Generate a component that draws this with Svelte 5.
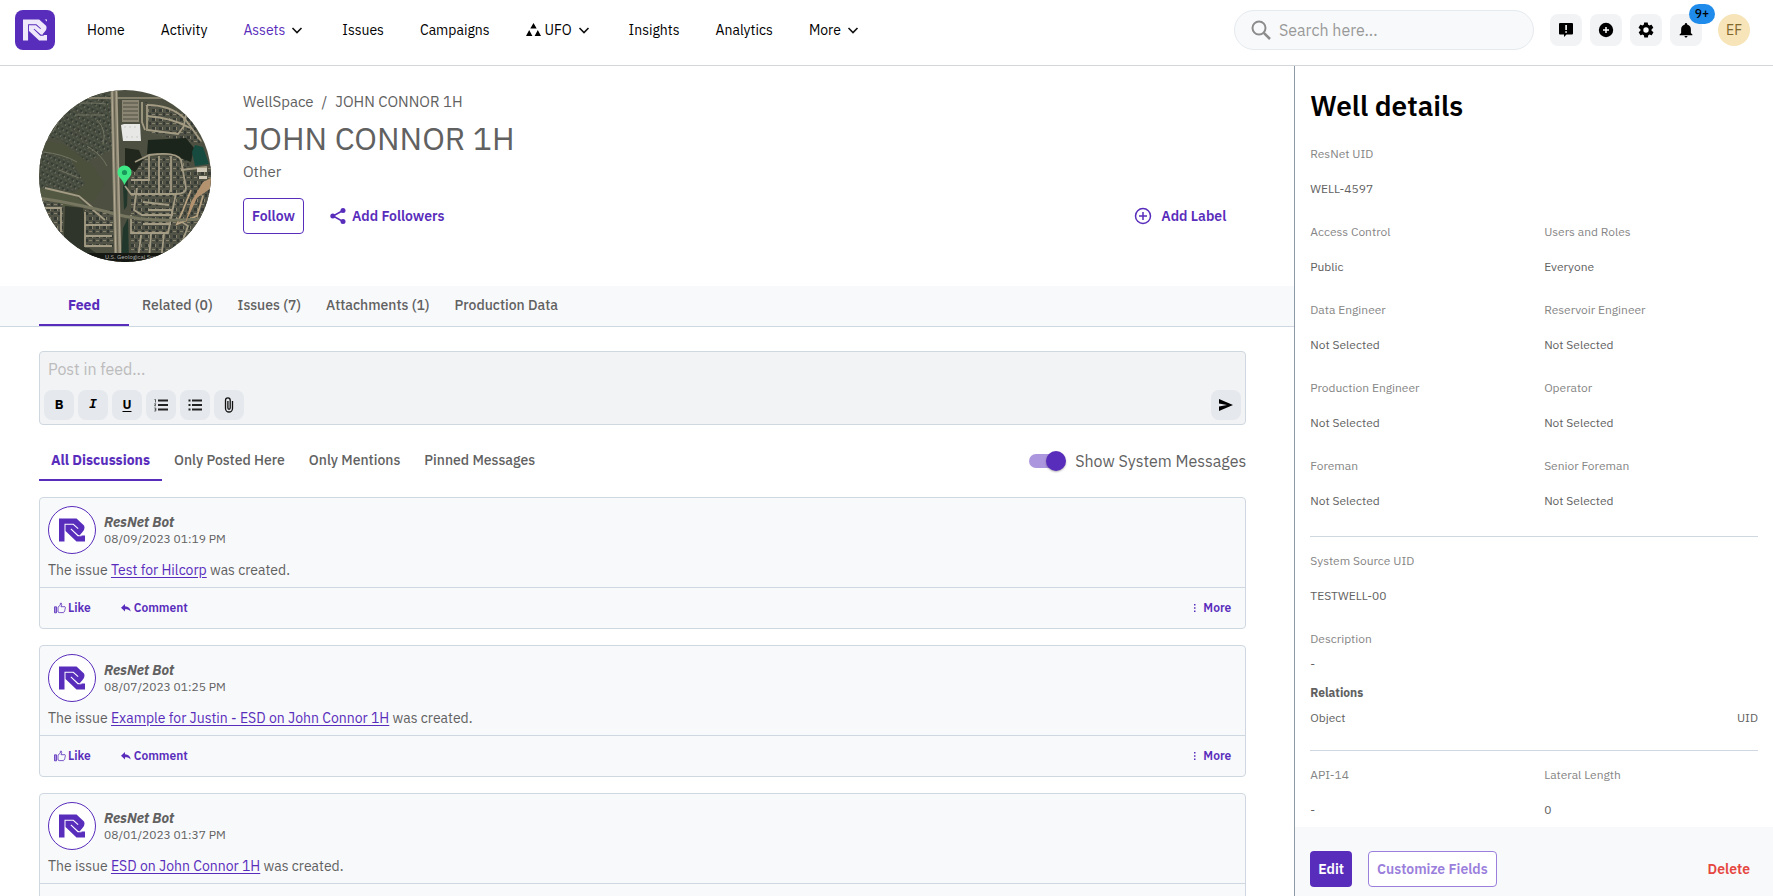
<script lang="ts">
    interface Post {
        date: string;
        issue: string;
    }

    interface Field {
        label: string;
        value: string;
        wide?: boolean;
    }

    const nav = [
        { label: "Home" },
        { label: "Activity" },
        { label: "Assets", menu: true, active: true },
        { label: "Issues" },
        { label: "Campaigns" },
        { label: "UFO", menu: true, icon: true },
        { label: "Insights" },
        { label: "Analytics" },
        { label: "More", menu: true },
    ];

    const tabs = ["Feed", "Related (0)", "Issues (7)", "Attachments (1)", "Production Data"];
    const filters = ["All Discussions", "Only Posted Here", "Only Mentions", "Pinned Messages"];

    const posts: Post[] = [
        { date: "08/09/2023 01:19 PM", issue: "Test for Hilcorp" },
        { date: "08/07/2023 01:25 PM", issue: "Example for Justin - ESD on John Connor 1H" },
        { date: "08/01/2023 01:37 PM", issue: "ESD on John Connor 1H" },
    ];

    const people: Field[] = [
        { label: "ResNet UID", value: "WELL-4597", wide: true },
        { label: "Access Control", value: "Public" },
        { label: "Users and Roles", value: "Everyone" },
        { label: "Data Engineer", value: "Not Selected" },
        { label: "Reservoir Engineer", value: "Not Selected" },
        { label: "Production Engineer", value: "Not Selected" },
        { label: "Operator", value: "Not Selected" },
        { label: "Foreman", value: "Not Selected" },
        { label: "Senior Foreman", value: "Not Selected" },
    ];

    const source: Field[] = [{ label: "System Source UID", value: "TESTWELL-00", wide: true }];

    const specs: Field[] = [
        { label: "API-14", value: "-" },
        { label: "Lateral Length", value: "0" },
    ];

    let activeTab = $state(0);
    let activeFilter = $state(0);
    let showSystem = $state(true);
    let search = $state("");
    let draft = $state("");
</script>

{#snippet logo(size: number, mark: boolean)}
    <svg width={size} height={size} viewBox="0 0 26 26" fill="currentColor" aria-hidden="true">
        <path
            fill-rule="evenodd"
            d="M0 1.500H17.500L25 8.500Q26.500 12 23.500 15L20.500 18.500H26V24.500H17.500L6.500 14V24.500H0ZM5.500 24.500V6.800H14.500L19.500 11.300 18.800 12 14 7.800H6.500V24.500ZM11.500 12.300L12.200 11.600 19.200 18 22.500 18.500V19.300H18.700Z"
        />
        {#if mark}
            <path d="M23.500 1.500H26V3.800z" />
        {/if}
    </svg>
{/snippet}

{#snippet chevron()}
    <svg class="chevron" width="12" height="12" viewBox="0 0 12 12" fill="none" stroke="#111" stroke-width="1.600" aria-hidden="true">
        <path d="M1.500 4L6 8.500 10.500 4" />
    </svg>
{/snippet}

{#snippet fieldList(fields: Field[])}
    <dl class="fields">
        {#each fields as field}
            <div class="field" class:wide={field.wide}>
                <dt>{field.label}</dt>
                <dd>{field.value}</dd>
            </div>
        {/each}
    </dl>
{/snippet}

<div class="app">
    <header class="topbar">
        <a class="brand" href="/" aria-label="ResNet">{@render logo(24, true)}</a>
        <nav class="nav">
            {#each nav as item}
                {#if item.menu}
                    <button class="nav-item" class:active={item.active}>
                        {#if item.icon}
                            <svg width="15" height="13" viewBox="0 0 15 13" aria-hidden="true">
                                <path d="M7.500 0l3.200 5.500H4.300zM3.200 7l3.200 6H0zM11.800 7l3.200 6H8.600z" />
                            </svg>
                        {/if}
                        <span class="nav-text">{item.label}</span>
                        {@render chevron()}
                    </button>
                {:else}
                    <a class="nav-item" href="/">{item.label}</a>
                {/if}
            {/each}
        </nav>
        <label class="search">
            <svg width="20" height="20" viewBox="0 0 20 20" fill="none" stroke="#8c8c8c" stroke-width="2" aria-hidden="true">
                <circle cx="8" cy="8" r="6.500" />
                <path d="M12.800 12.800L19 19" stroke-width="2.500" />
            </svg>
            <input type="text" placeholder="Search here..." aria-label="Search" bind:value={search} />
        </label>
        <div class="tools">
            <button class="tool" aria-label="Feedback">
                <svg width="16" height="16" viewBox="0 0 16 16">
                    <path d="M2 1h12a1 1 0 0 1 1 1v9.500a1 1 0 0 1-1 1H8.500L6 15v-2.500H2a1 1 0 0 1-1-1V2a1 1 0 0 1 1-1z" />
                    <path d="M7.300 3h1.600v5H7.300zM7.300 9.200h1.600v1.600H7.300z" fill="#fff" />
                </svg>
            </button>
            <button class="tool" aria-label="Create">
                <svg width="16" height="16" viewBox="0 0 16 16">
                    <circle cx="8" cy="8" r="7.200" />
                    <path d="M8 5v6M5 8h6" stroke="#fff" stroke-width="1.500" />
                </svg>
            </button>
            <button class="tool" aria-label="Settings">
                <svg width="18" height="18" viewBox="0 0 24 24">
                    <path
                        d="M19.400 13c0-.3.100-.6.100-1s0-.7-.1-1l2.100-1.600c.2-.2.200-.4.100-.6l-2-3.500c-.1-.2-.4-.3-.6-.2l-2.500 1c-.5-.4-1.100-.7-1.700-1l-.4-2.600c0-.3-.2-.5-.5-.5h-4c-.2 0-.5.2-.5.500l-.4 2.600c-.6.200-1.100.6-1.700 1l-2.500-1c-.2-.1-.5 0-.6.200l-2 3.500c-.1.200-.1.500.1.600L4.600 11c0 .3-.1.700-.1 1s0 .7.100 1l-2.100 1.600c-.2.200-.2.400-.1.600l2 3.500c.1.200.4.300.6.200l2.500-1c.5.400 1.100.7 1.700 1l.4 2.600c0 .3.200.5.500.5h4c.2 0 .5-.2.500-.5l.4-2.600c.6-.2 1.100-.6 1.700-1l2.500 1c.2.100.5 0 .6-.2l2-3.500c.1-.2.100-.5-.1-.6z"
                    />
                    <circle cx="12" cy="12" r="3.600" fill="#fff" />
                </svg>
            </button>
            <button class="tool" aria-label="Notifications">
                <svg width="18" height="18" viewBox="0 0 24 24">
                    <path
                        d="M12 22c1.100 0 2-.9 2-2h-4c0 1.100.9 2 2 2zm6.500-6v-5c0-3.100-1.900-5.600-5-6.300V4a1.500 1.500 0 0 0-3 0v.7c-3.100.7-5 3.200-5 6.300v5l-2 2v1h17v-1z"
                    />
                </svg>
                <span class="badge">9+</span>
            </button>
        </div>
        <button class="user">EF</button>
    </header>

    <div class="columns">
        <main class="main">
            <section class="hero">
                <svg class="map" viewBox="0 0 172 172" role="img" aria-label="Well location">
                    <defs>
                        <clipPath id="round"><circle cx="86" cy="86" r="86" /></clipPath>
                        <pattern id="homes" width="7" height="9" patternUnits="userSpaceOnUse">
                            <rect width="7" height="9" fill="#515346" />
                            <path d="M1 1h3v3H1zM5 5h2v3H5z" fill="#363a35" />
                            <path d="M4 1h1v3H4zM1 6h3v1H1z" fill="#85816d" />
                        </pattern>
                        <pattern id="homesLeft" width="5" height="6" patternUnits="userSpaceOnUse" patternTransform="rotate(24)">
                            <rect width="5" height="6" fill="#464c3f" />
                            <path d="M1 1h2v2H1z" fill="#343a31" />
                            <path d="M0 5h2v1H0z" fill="#5b5e4e" />
                            <path d="M3 2h1v2H3z" fill="#6f7060" />
                        </pattern>
                    </defs>
                    <g clip-path="url(#round)">
                        <rect width="172" height="172" fill="#4d5040" />
                        <path d="M0 0h73v60L48 72 22 50 0 46z" fill="url(#homesLeft)" />
                        <path d="M0 50l24 4 28 20 14 20-12 18-18-8L0 76z" fill="#4a503b" />
                        <path d="M2 60l30 10 14 24-10 8-36-4z" fill="url(#homesLeft)" />
                        <path d="M0 98l34 5 14 14H0z" fill="#535842" />
                        <path d="M0 110l24 4v40H0z" fill="url(#homes)" />
                        <path d="M26 116l18 2 6 40 20 14H24z" fill="#2f352a" />
                        <path d="M46 120h28v38H46z" fill="url(#homes)" />
                        <path d="M106 12l44 12 14 30-52-10z" fill="url(#homes)" />
                        <path d="M98 70l50-6 8 38-6 70H92V90z" fill="url(#homes)" />
                        <path d="M156 76h16v96h-28z" fill="url(#homes)" />
                        <path d="M83 10h17v22H83z" fill="#8a8673" />
                        <path d="M84 13h15M84 17h15M84 21h15M84 25h15M84 29h15" stroke="#504f45" />
                        <path d="M109 50l38-2 8 10-3 14-24-9-20 1z" fill="#1b251c" />
                        <path d="M86 58l14 2 4 10-8 12-10-6z" fill="#22271e" />
                        <path d="M156 55l8 2 6 17-14 2-3-14z" fill="#174b40" />
                        <path d="M84 96l5-6-1 26-3 4zM84 138l5-10 1 44h-8z" fill="#21372c" />
                        <g fill="none" stroke="#a39b83" stroke-width="1.800">
                            <path d="M103 12v20l3 8M108 15q24 0 38 14M108 26q26 2 43 12M109 40l30 4 6-8 2-12" />
                            <path d="M108 15v26M146 29l16 22" />
                            <path d="M96 72l14-7q28-4 32 5l5 28q0 6-10 6H92l-6-8M110 66v24H92M120 66v37M132 66v36M142 80l26-3M98 98l-3 22 8 5h30v-5h-24" />
                            <path d="M92 125v18h37l8-40M102 145l-3 24M112 144l-2 26M125 144l-3 27M137 128l12 8-8 22-10 8M104 112l26 3M104 134h28" />
                            <path d="M152 100l-8 20-6 14 20-8 6-20" stroke="#b8a382" />
                            <path d="M31 14q22-2 36 0M36 25h30M4 62q20 2 34 10M48 56q14 8 20 20M14 42l14-26M20 80l20 8M58 30q10 10 6 24" stroke="#727463" stroke-width="1" />
                            <path d="M6 98l34 8 14 12M0 118h22v24M46 122v34h27M46 135h27M46 146h27M54 120l12 10" />
                        </g>
                        <path d="M0 108q40 6 76 16t96 4" fill="none" stroke="#777660" stroke-width="3" />
                        <path d="M0 8h172" stroke="#85806c" stroke-width="2" />
                        <path d="M75-2l4 176" stroke="#8b8571" stroke-width="7" />
                        <path d="M73-2l4 176M77.500-2l4 176" stroke="#b3ab94" />
                        <path d="M75-2l4 176" stroke="#625f4f" />
                        <path d="M82 35l3-1h16l1 17H84z" fill="#e7e8e5" />
                        <path d="M85 37h13M87 47h12" stroke="#c9cbc7" stroke-dasharray="2 3" />
                        <path d="M152 112l12-20 8-4v10l-14 10-12 26z" fill="#b3936f" />
                        <path d="M158 78h10v4h-10zM160 86h8v3h-8z" fill="#d1c9b7" />
                        <rect y="163" width="172" height="9" fill="#151713" />
                        <text x="66" y="169" class="credit">U.S. Geological Survey</text>
                        <path d="M85.500 95c-2-6-7-8-7-12.500a7 7 0 0 1 14 0c0 4.500-5 6.500-7 12.500z" fill="#3ee884" />
                        <circle cx="85.500" cy="82.500" r="2.600" fill="#18995b" />
                    </g>
                </svg>
                <div class="intro">
                    <div class="crumbs">
                        <a href="/">WellSpace</a>
                        <span>/</span>
                        <span>JOHN CONNOR 1H</span>
                    </div>
                    <h1>JOHN CONNOR 1H</h1>
                    <p class="kind">Other</p>
                    <div class="hero-actions">
                        <button class="outlined">Follow</button>
                        <button class="link-button">
                            <svg width="16" height="16" viewBox="0 0 16 16" aria-hidden="true">
                                <path d="M13 2.500L3 8l10 5.500" fill="none" stroke="currentColor" stroke-width="1.500" />
                                <circle cx="13" cy="2.500" r="2.500" fill="currentColor" />
                                <circle cx="2.800" cy="8" r="2.500" fill="currentColor" />
                                <circle cx="13" cy="13.500" r="2.500" fill="currentColor" />
                            </svg>
                            Add Followers
                        </button>
                        <button class="link-button add-label">
                            <svg width="18" height="18" viewBox="0 0 18 18" fill="none" stroke="currentColor" stroke-width="1.500" aria-hidden="true">
                                <circle cx="9" cy="9" r="7.500" />
                                <path d="M9 5v8M5 9h8" />
                            </svg>
                            Add Label
                        </button>
                    </div>
                </div>
            </section>

            <div class="tabs" role="tablist">
                {#each tabs as tab, i}
                    <button class="tab" role="tab" class:active={activeTab === i} aria-selected={activeTab === i} onclick={() => (activeTab = i)}>
                        {tab}
                    </button>
                {/each}
            </div>

            <section class="feed">
                <div class="editor">
                    <input class="draft" type="text" placeholder="Post in feed..." aria-label="Post in feed" bind:value={draft} />
                    <div class="format">
                        <button class="format-button bold" aria-label="Bold">B</button>
                        <button class="format-button italic" aria-label="Italic">I</button>
                        <button class="format-button underline" aria-label="Underline">U</button>
                        <button class="format-button" aria-label="Numbered list">
                            <svg width="14" height="14" viewBox="0 0 14 14" fill="none" stroke="#222">
                                <path d="M4 2.500h10M4 7h10M4 11.500h10" stroke-width="1.800" />
                                <path d="M.5 1.500h1v3M.3 5.800h1.500l-1.200 2h1.400M.3 10h1.500v3H.3M.8 11.500h1" stroke-width=".7" />
                            </svg>
                        </button>
                        <button class="format-button" aria-label="Bulleted list">
                            <svg width="14" height="14" viewBox="0 0 14 14" fill="none" stroke="#222" stroke-width="1.800">
                                <path d="M4 2.500h10M4 7h10M4 11.500h10M.5 2.500h2M.5 7h2M.5 11.500h2" />
                            </svg>
                        </button>
                        <button class="format-button" aria-label="Attach file">
                            <svg width="10" height="16" viewBox="0 0 10 16" fill="none" stroke="#111" stroke-width="1.300">
                                <path d="M8.500 4v7.500a3.500 3.500 0 0 1-7 0V3.300a2.300 2.300 0 0 1 4.700 0v7.800a1.100 1.100 0 0 1-2.300 0V4" />
                            </svg>
                        </button>
                        <button class="format-button send" aria-label="Send">
                            <svg width="14" height="14" viewBox="0 0 14 14">
                                <path d="M0 1l14 6-14 6V8.500L8 7 0 5.500z" />
                            </svg>
                        </button>
                    </div>
                </div>

                <div class="filters">
                    <div class="filter-tabs" role="tablist">
                        {#each filters as filter, i}
                            <button class="filter" role="tab" class:active={activeFilter === i} aria-selected={activeFilter === i} onclick={() => (activeFilter = i)}>
                                {filter}
                            </button>
                        {/each}
                    </div>
                    <label class="switch">
                        <input type="checkbox" bind:checked={showSystem} />
                        Show System Messages
                    </label>
                </div>

                {#each posts as post}
                    <article class="post">
                        <div class="post-body">
                            <div class="author">
                                <div class="bot">{@render logo(26, false)}</div>
                                <div>
                                    <div class="name">ResNet Bot</div>
                                    <div class="date">{post.date}</div>
                                </div>
                            </div>
                            <p class="message">The issue <a href="/">{post.issue}</a> was created.</p>
                        </div>
                        <div class="post-actions">
                            <button class="small-action">
                                <svg width="12" height="12" viewBox="0 0 12 12" fill="none" stroke="currentColor" stroke-width=".8" aria-hidden="true">
                                    <path d="M.5 4.800h2v6h-2z" fill="currentColor" fill-opacity=".5" />
                                    <path d="M4 5.200L6.300 3V1.300Q7.800.4 7.700 2.500L7 4.700h4q.8.400.2 1.400.3.900-.3 1.600.1.800-.5 1.400 0 1.100-.8 1.500H5.200L4 10z" />
                                </svg>
                                Like
                            </button>
                            <button class="small-action comment">
                                <svg width="10" height="10" viewBox="0 0 10 10" fill="currentColor" aria-hidden="true">
                                    <path d="M4 1v2.200c3.500.2 5.200 2 5.700 5.300C8.300 6.800 6.700 6.200 4 6.200v2.300L0 4.800z" />
                                </svg>
                                Comment
                            </button>
                            <button class="small-action more">
                                <svg width="4" height="10" viewBox="0 0 4 10" fill="currentColor" aria-hidden="true">
                                    <path d="M1 1h1.500v1.500H1zM1 4.300h1.500v1.500H1zM1 7.600h1.500v1.500H1z" />
                                </svg>
                                More
                            </button>
                        </div>
                    </article>
                {/each}
            </section>
        </main>

        <aside class="details">
            <div class="details-body">
                <h2>Well details</h2>
                {@render fieldList(people)}
                <hr />
                {@render fieldList(source)}
                <dl class="fields description">
                    <div class="field compact">
                        <dt>Description</dt>
                        <dd>-</dd>
                    </div>
                </dl>
                <table class="relations">
                    <caption>Relations</caption>
                    <thead>
                        <tr>
                            <th>Object</th>
                            <th>UID</th>
                        </tr>
                    </thead>
                </table>
                <hr class="after-table" />
                {@render fieldList(specs)}
            </div>
            <footer class="details-footer">
                <button class="filled">Edit</button>
                <button class="outlined faded">Customize Fields</button>
                <button class="delete">Delete</button>
            </footer>
        </aside>
    </div>
</div>

<style>
    :global(body) {
        background: #fff;
    }

    .app {
        --purple: #592dbb;
        --gray: #616161;
        --line: #cfd8e0;
        display: flex;
        flex-direction: column;
        height: 100vh;
        overflow: hidden;
        font-family: "IBM Plex Sans", Roboto, sans-serif;
        font-size: 14px;
        line-height: 20px;
        color: var(--gray);
    }

    .app * {
        box-sizing: border-box;
    }

    button,
    input {
        font: inherit;
        color: inherit;
        margin: 0;
    }

    button {
        border: none;
        background: transparent;
        padding: 0;
        cursor: pointer;
        white-space: nowrap;
    }

    svg {
        flex-shrink: 0;
    }

    .topbar {
        display: flex;
        align-items: center;
        flex-shrink: 0;
        height: 66px;
        padding: 0 23px 6px 15px;
        border-bottom: 1px solid #d3d6da;
    }

    .brand {
        display: flex;
        align-items: center;
        justify-content: center;
        width: 40px;
        height: 40px;
        border-radius: 8px;
        background: var(--purple);
        color: #eee8fa;
    }

    .nav {
        display: flex;
        margin-left: 14px;
    }

    .nav-item {
        display: flex;
        align-items: center;
        padding: 8px 18px;
        color: #000;
        text-decoration: none;
    }

    .nav-item.active {
        color: var(--purple);
    }

    .nav-text {
        margin: 0 6px 0 4px;
    }

    .nav-text:first-child {
        margin-left: 0;
    }

    .chevron {
        margin-right: 3px;
    }

    .search {
        display: flex;
        align-items: center;
        gap: 8px;
        width: 300px;
        height: 40px;
        margin-left: auto;
        padding: 0 16px;
        border: 1px solid #e5eaee;
        border-radius: 20px;
        background: #f8f9fb;
    }

    .search input {
        flex: 1;
        min-width: 0;
        border: none;
        outline: none;
        background: transparent;
        padding: 0;
        font-size: 16px;
    }

    .search input::placeholder {
        color: #999;
    }

    .tools {
        display: flex;
        gap: 8px;
        margin: 0 16px;
    }

    .tool {
        position: relative;
        display: flex;
        align-items: center;
        justify-content: center;
        width: 32px;
        height: 32px;
        border-radius: 8px;
        background: #f2f3f5;
    }

    .badge {
        position: absolute;
        top: -10px;
        right: -13px;
        min-width: 26px;
        height: 20px;
        border-radius: 10px;
        background: #1f8ceb;
        color: #000;
        font-size: 12px;
        font-weight: 500;
    }

    .user {
        width: 32px;
        height: 32px;
        border-radius: 50%;
        background: #f7e5b9;
        color: #80672b;
    }

    .columns {
        display: grid;
        grid-template-columns: 73fr 27fr;
        flex: 1;
        min-height: 0;
    }

    .main {
        min-width: 0;
        overflow-y: auto;
        scrollbar-width: none;
    }

    .hero {
        display: flex;
        gap: 32px;
        padding: 24px 48px 24px 39px;
    }

    .map {
        width: 172px;
        height: 172px;
    }

    .credit {
        font-size: 6px;
        fill: #b3b3ad;
    }

    .intro {
        flex: 1;
    }

    .crumbs,
    .kind {
        font-size: 15px;
    }

    .crumbs {
        display: flex;
        gap: 8px;
        padding-top: 2px;
    }

    .crumbs a {
        color: inherit;
        text-decoration: none;
    }

    h1 {
        margin: 8px 0 6px;
        font-size: 32px;
        line-height: 36px;
        font-weight: 400;
    }

    .kind {
        margin: 0;
    }

    .hero-actions {
        display: flex;
        align-items: center;
        margin-top: 16px;
    }

    .outlined {
        height: 36px;
        padding: 0 8px;
        border: 1px solid var(--purple);
        border-radius: 4px;
        background: #fff;
        color: var(--purple);
        font-weight: 600;
    }

    .link-button {
        display: flex;
        align-items: center;
        gap: 6px;
        margin-left: 26px;
        color: var(--purple);
        font-weight: 600;
    }

    .add-label {
        gap: 9px;
        margin-left: auto;
        margin-right: 20px;
    }

    .tabs {
        display: flex;
        gap: 1px;
        height: 41px;
        padding-left: 39px;
        border-bottom: 1px solid var(--line);
        background: #f8f9fb;
    }

    .tab,
    .filter {
        padding: 0 12px;
        border-bottom: 2px solid transparent;
        font-weight: 500;
    }

    .tab:first-child {
        min-width: 90px;
    }

    .tab.active,
    .filter.active {
        border-color: var(--purple);
        color: var(--purple);
        font-weight: 700;
    }

    .feed {
        padding: 24px 48px 16px 39px;
    }

    .editor {
        padding: 4px;
        border: 1px solid var(--line);
        border-radius: 4px;
        background: #f2f3f5;
    }

    .draft {
        display: block;
        width: 100%;
        height: 26px;
        margin-bottom: 8px;
        padding: 0 4px;
        border: none;
        outline: none;
        background: transparent;
        font-size: 16px;
    }

    .draft::placeholder {
        color: #bcbcbc;
    }

    .format {
        display: flex;
        gap: 4px;
    }

    .format-button {
        display: flex;
        align-items: center;
        justify-content: center;
        width: 30px;
        height: 30px;
        border-radius: 8px;
        background: #e5e8ed;
        color: #000;
    }

    .bold,
    .italic,
    .underline {
        font-size: 13px;
        font-weight: 700;
    }

    .italic {
        font-family: "Liberation Mono", monospace;
        font-style: italic;
    }

    .underline {
        text-decoration: underline;
        text-underline-offset: 2px;
    }

    .send {
        margin-left: auto;
    }

    .filters {
        display: flex;
        align-items: center;
        justify-content: space-between;
        margin: 16px 0;
    }

    .filter-tabs {
        display: flex;
        height: 40px;
    }

    .switch {
        display: flex;
        align-items: center;
        gap: 12px;
        font-size: 16px;
    }

    .switch input {
        appearance: none;
        position: relative;
        width: 34px;
        height: 14px;
        border-radius: 7px;
        background: #ac96dd;
    }

    .switch input::before {
        content: "";
        position: absolute;
        top: -3px;
        left: -3px;
        width: 20px;
        height: 20px;
        border-radius: 50%;
        background: var(--purple);
        box-shadow: 0 1px 2px rgba(0, 0, 0, 0.3);
    }

    .switch input:checked::before {
        left: 17px;
    }

    .post {
        margin-bottom: 16px;
        border: 1px solid var(--line);
        border-radius: 4px;
        background: #f8f9fb;
    }

    .post-body {
        padding: 8px 8px 7px;
        border-bottom: 1px solid var(--line);
    }

    .author {
        display: flex;
        align-items: center;
        gap: 8px;
    }

    .bot {
        display: flex;
        align-items: center;
        justify-content: center;
        width: 48px;
        height: 48px;
        border: 1px solid var(--purple);
        border-radius: 50%;
        background: #fff;
        color: var(--purple);
    }

    .name {
        line-height: 18px;
        font-style: italic;
        font-weight: 700;
    }

    .date {
        font-size: 12px;
        line-height: 16px;
    }

    .message {
        margin: 6px 0 0;
    }

    .message a {
        color: var(--purple);
        text-underline-offset: 2px;
    }

    .post-actions {
        display: flex;
        height: 40px;
        padding: 0 14px;
    }

    .small-action {
        display: flex;
        align-items: center;
        gap: 2px;
        color: var(--purple);
        font-size: 12px;
        line-height: 16px;
        font-weight: 600;
    }

    .comment {
        margin-left: 30px;
        gap: 3px;
    }

    .more {
        margin-left: auto;
        gap: 6px;
    }

    .details {
        display: flex;
        flex-direction: column;
        min-width: 0;
        min-height: 0;
        border-left: 1px solid #8d9aa6;
        font-size: 12px;
        line-height: 16px;
    }

    .details-body {
        flex: 1;
        min-height: 0;
        padding: 22px 15px 0;
        overflow-y: auto;
        scrollbar-width: none;
    }

    h2 {
        margin: 0 0 22px;
        color: #000;
        font-size: 28px;
        line-height: 36px;
        font-weight: 600;
    }

    .fields {
        display: grid;
        grid-template-columns: 1fr 1fr;
        gap: 27px 20px;
        margin: 0;
    }

    .field {
        display: grid;
        gap: 19px;
    }

    .field.wide {
        grid-column: 1 / -1;
    }

    .field.compact {
        gap: 9px;
    }

    dt {
        color: #858585;
    }

    dd {
        margin: 0;
    }

    hr {
        height: 1px;
        margin: 27px 0 16px;
        border: none;
        background: var(--line);
    }

    .after-table {
        margin-top: 24px;
    }

    .description {
        margin: 27px 0 13px;
    }

    .relations {
        width: 100%;
        border-collapse: collapse;
    }

    .relations caption {
        padding-bottom: 9px;
        text-align: left;
        font-weight: 700;
    }

    .relations th {
        padding: 0;
        text-align: left;
        font-weight: 400;
    }

    .relations th:last-child {
        text-align: right;
    }

    .details-footer {
        display: flex;
        gap: 16px;
        padding: 24px 15px 9px;
        background: #f8f9fb;
        font-size: 14px;
        font-weight: 600;
    }

    .filled {
        padding: 0 8px;
        border-radius: 4px;
        background: var(--purple);
        color: #fff;
    }

    .faded {
        border-color: #9b7fdc;
        color: #9b7fdc;
    }

    .delete {
        margin-left: auto;
        padding: 0 8px;
        color: #e54640;
    }
</style>
